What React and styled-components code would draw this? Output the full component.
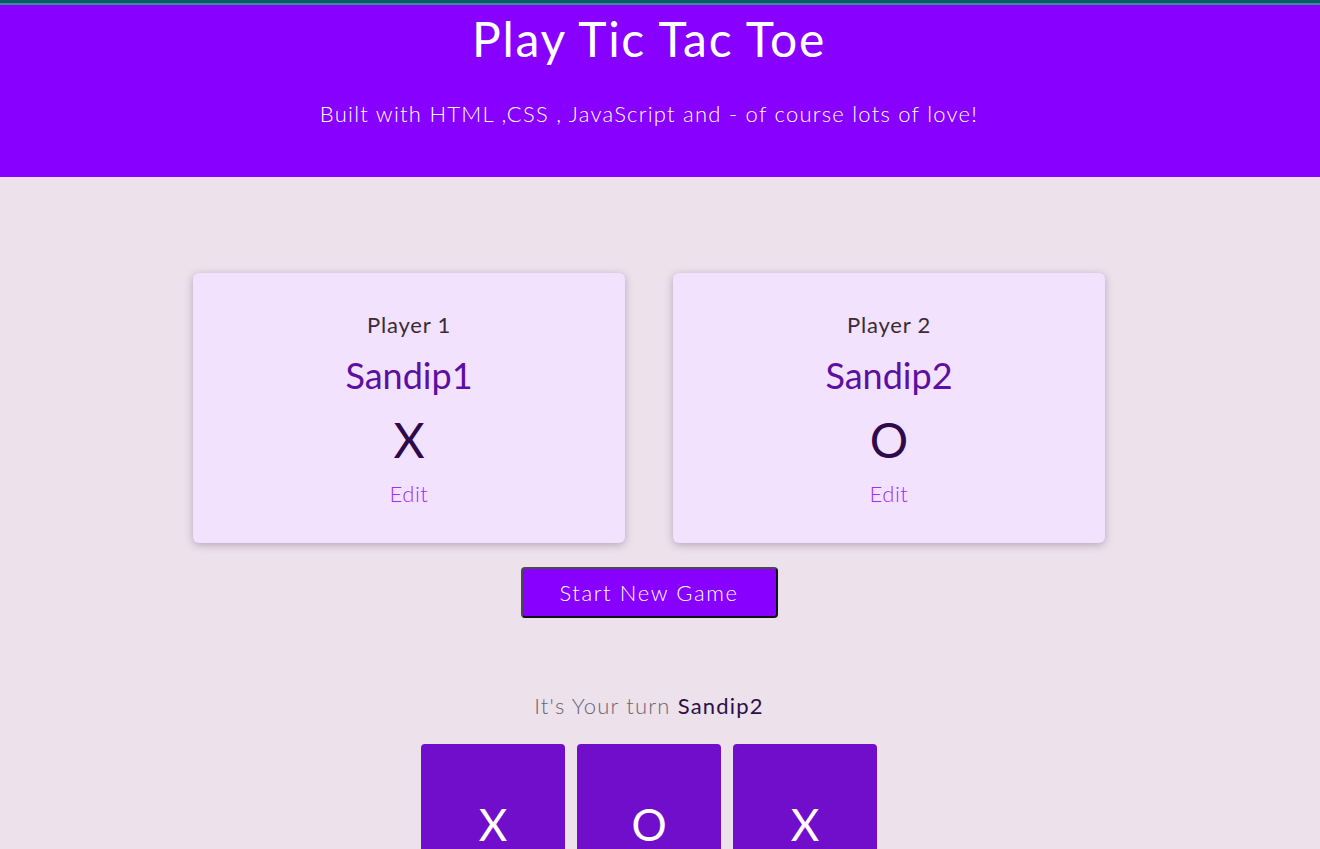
import React from 'react'
import styled, { createGlobalStyle } from 'styled-components'

const GlobalStyle = createGlobalStyle`
  * {
    box-sizing: border-box;
  }
  body {
    margin: 0;
    background: #ede2eb;
    font-family: Lato, 'Noto Sans', sans-serif;
    overflow: hidden;
  }
`

const Header = styled.header`
  background: #8800ff;
  border-top: 3px solid #0b5c6b;
  height: 177px;
  padding-right: 22px;
  text-align: center;
  color: #ffffff;
  position: relative;
  &::before {
    content: '';
    position: absolute;
    left: 0;
    right: 0;
    top: 0;
    height: 2px;
    background: #3d8a8f;
  }
  h1 {
    margin: 0;
    padding-top: 7px;
    font-size: 48px;
    line-height: 58px;
    font-weight: 400;
    letter-spacing: 1.7px;
  }
  p {
    margin: 29px 0 0;
    font-size: 22px;
    line-height: 33px;
    font-weight: 300;
    letter-spacing: 1.25px;
  }
`

const Main = styled.main`
  padding: 96px 22px 0 0;
  display: flex;
  flex-direction: column;
  align-items: center;
`

const Players = styled.section`
  display: grid;
  grid-template-columns: 432px 432px;
  column-gap: 48px;
`

const Card = styled.article`
  height: 270px;
  background: #f3e2fd;
  border-radius: 6px;
  box-shadow: 0 2px 8px rgba(60, 20, 70, 0.3);
  display: flex;
  flex-direction: column;
  align-items: center;
  padding-top: 36px;
`

const Label = styled.h3`
  margin: 0;
  font-size: 22px;
  line-height: 32px;
  font-weight: 400;
  letter-spacing: 0.8px;
  color: #3b2a36;
`

const Name = styled.h2`
  margin: 12px 0 0;
  font-size: 36px;
  line-height: 44px;
  font-weight: 400;
  color: #5e0fa3;
`

const Symbol = styled.p`
  margin: 15px 0 0;
  font-size: 48px;
  line-height: 56px;
  color: #2e0a4c;
`

const EditButton = styled.button`
  margin-top: 10px;
  background: none;
  border: none;
  padding: 0;
  font: inherit;
  font-size: 22px;
  line-height: 32px;
  font-weight: 300;
  letter-spacing: 0.5px;
  color: #a02cff;
  cursor: pointer;
`

const StartButton = styled.button`
  margin-top: 24px;
  width: 257px;
  height: 51px;
  background: #8800ff;
  color: #ffffff;
  font: inherit;
  font-size: 22px;
  font-weight: 300;
  letter-spacing: 1.6px;
  border: 2px solid #4a4a4a;
  border-right-color: #111;
  border-bottom-color: #111;
  border-radius: 4px;
  cursor: pointer;
`

const Turn = styled.p`
  margin: 72px 0 0;
  font-size: 22px;
  line-height: 32px;
  font-weight: 300;
  letter-spacing: 1.2px;
  color: #6c6470;
  span {
    font-weight: 400;
    color: #2c0e4a;
  }
`

const Board = styled.ol`
  list-style: none;
  margin: 22px 0 0;
  padding: 0;
  display: grid;
  grid-template-columns: repeat(3, 144px);
  grid-auto-rows: 160px;
  gap: 12px;
`

const Cell = styled.li`
  background: #710ecb;
  border-radius: 4px;
  display: flex;
  align-items: center;
  justify-content: center;
  color: #ffffff;
  font-size: 44px;
  font-weight: 400;
`

const players = [
  { label: 'Player 1', name: 'Sandip1', symbol: 'X' },
  { label: 'Player 2', name: 'Sandip2', symbol: 'O' },
]

const cells = ['X', 'O', 'X', '', '', '', '', '', '']

const App = () => {
  return (
    <>
      <GlobalStyle />
      <Header>
        <h1>Play Tic Tac Toe</h1>
        <p>Built with HTML ,CSS , JavaScript and - of course lots of love!</p>
      </Header>
      <Main>
        <Players>
          {players.map((p) => (
            <Card key={p.label}>
              <Label>{p.label}</Label>
              <Name>{p.name}</Name>
              <Symbol>{p.symbol}</Symbol>
              <EditButton>Edit</EditButton>
            </Card>
          ))}
        </Players>
        <StartButton>Start New Game</StartButton>
        <Turn>
          It's Your turn <span>Sandip2</span>
        </Turn>
        <Board>
          {cells.map((c, i) => (
            <Cell key={i}>{c}</Cell>
          ))}
        </Board>
      </Main>
    </>
  )
}

export default App
